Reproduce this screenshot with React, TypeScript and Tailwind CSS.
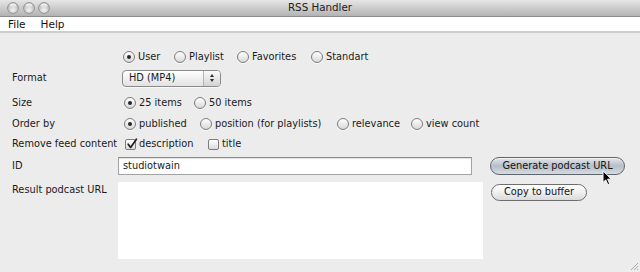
import React from 'react';

const Radio = ({ checked }: { checked?: boolean }) => (
  <span className="relative flex h-[12px] w-[12px] shrink-0 items-center justify-center rounded-full border border-[#7d7d7d] bg-linear-to-b from-white to-[#d9d9d9] shadow-[0_1px_0_rgba(255,255,255,0.8)]">
    {checked && <span className="h-[4px] w-[4px] rounded-full bg-[#262626]" />}
  </span>
);

const Check = ({ checked }: { checked?: boolean }) => (
  <span className="relative flex h-[11px] w-[11px] shrink-0 items-center justify-center rounded-[2px] border border-[#7d7d7d] bg-linear-to-b from-white to-[#dcdcdc]">
    {checked && (
      <svg viewBox="0 0 12 12" className="absolute -top-[2px] left-[0px] h-[12px] w-[12px]">
        <path d="M2.2 6.2 L4.6 9.4 L10.4 1.2" fill="none" stroke="#1f1f1f" strokeWidth="1.7" strokeLinecap="round" strokeLinejoin="round" />
      </svg>
    )}
  </span>
);

const Option = ({ label, checked, w, box }: { label: string; checked?: boolean; w: string; box?: boolean }) => (
  <div className={`flex items-center gap-[3px] ${w}`}>
    {box ? <Check checked={checked} /> : <Radio checked={checked} />}
    <span>{label}</span>
  </div>
);

const Light = () => (
  <svg viewBox="0 0 12 12" className="h-[12px] w-[12px]">
    <defs>
      <radialGradient id="lg" cx="50%" cy="70%" r="60%">
        <stop offset="0%" stopColor="#f4f4f4" />
        <stop offset="100%" stopColor="#b9b9b9" />
      </radialGradient>
      <linearGradient id="hl" x1="0" y1="0" x2="0" y2="1">
        <stop offset="0%" stopColor="#ffffff" stopOpacity="0.95" />
        <stop offset="100%" stopColor="#ffffff" stopOpacity="0.1" />
      </linearGradient>
    </defs>
    <circle cx="6" cy="6" r="5.4" fill="url(#lg)" stroke="#8d8d8d" strokeWidth="0.9" />
    <ellipse cx="6" cy="3.6" rx="3.4" ry="2" fill="url(#hl)" />
  </svg>
);

export default function App() {
  return (
    <div className="flex h-[272px] w-[640px] flex-col overflow-hidden bg-[#ececec] font-['DejaVu_Sans',sans-serif] text-[9.8px] text-[#1a1a1a]">
      {/* title bar */}
      <div className="relative flex h-[17px] items-center border-b border-[#8c8c8c] bg-linear-to-b from-[#e6e6e6] to-[#b3b3b3] px-[7px]">
        <div className="flex gap-[3.5px]">
          <Light />
          <Light />
          <Light />
        </div>
        <div className="absolute inset-0 flex items-center justify-center text-[10.3px] text-[#222]">RSS Handler</div>
      </div>

      {/* menu bar */}
      <div className="flex h-[16px] items-center gap-[15px] border-b-2 border-[#cdcdcd] bg-white px-[8px] pt-[1px] text-[10.5px] text-[#111]">
        <span>File</span>
        <span>Help</span>
      </div>

      <div className="relative flex flex-1 flex-col pl-[12px] pt-[14px]">
        <div className="flex h-[20px] items-center pl-[111px]">
          <Option label="User" checked w="w-[51px]" />
          <Option label="Playlist" w="w-[63px]" />
          <Option label="Favorites" w="w-[74px]" />
          <Option label="Standart" w="w-[80px]" />
        </div>

        <div className="mt-[1px] flex h-[20px] items-center">
          <span className="w-[110px]">Format</span>
          <div className="flex h-[17px] w-[99px] items-center overflow-hidden rounded-[4px] border border-[#8a8a8a] bg-linear-to-b from-white to-[#e2e2e2] shadow-[0_1px_0_rgba(255,255,255,0.7)]">
            <span className="flex-1 pl-[6px]">HD (MP4)</span>
            <div className="flex h-full w-[17px] flex-col items-center justify-center gap-[2px] border-l border-[#b5b5b5] bg-linear-to-b from-[#fafafa] to-[#d4d4d4]">
              <span className="h-0 w-0 border-x-[2.5px] border-b-[3px] border-x-transparent border-b-[#2b2b2b]" />
              <span className="h-0 w-0 border-x-[2.5px] border-t-[3px] border-x-transparent border-t-[#2b2b2b]" />
            </div>
          </div>
        </div>

        <div className="mt-[5px] flex h-[20px] items-center">
          <span className="w-[112px]">Size</span>
          <Option label="25 items" checked w="w-[70px]" />
          <Option label="50 items" w="w-[80px]" />
        </div>

        <div className="mt-[1px] flex h-[20px] items-center">
          <span className="w-[112px]">Order by</span>
          <Option label="published" checked w="w-[76px]" />
          <Option label="position (for playlists)" w="w-[137px]" />
          <Option label="relevance" w="w-[74px]" />
          <Option label="view count" w="w-[80px]" />
        </div>

        <div className="flex h-[20px] items-center">
          <span className="w-[113px]">Remove feed content</span>
          <Option label="description" checked box w="w-[83px]" />
          <Option label="title" box w="w-[60px]" />
        </div>

        <div className="mt-[3px] flex h-[18px] items-center">
          <span className="w-[106px]">ID</span>
          <div className="flex h-[18px] w-[354px] items-center border border-[#a3a3a3] border-t-[#8a8a8a] bg-white pl-[4px] shadow-[inset_0_1px_1px_rgba(0,0,0,0.12)]">
            studiotwain
          </div>
          <button className="ml-[18px] flex h-[18px] w-[135px] items-center justify-center rounded-full border border-[#5e646c] bg-linear-to-b from-[#e3e7ec] via-[#b7bec7] to-[#d6dbe1] text-[#151515] shadow-[inset_0_1px_0_rgba(255,255,255,0.6)]">
            Generate podcast URL
          </button>
        </div>

        <div className="mt-[7px] flex items-start">
          <span className="w-[106px] pt-[1px]">Result podcast URL</span>
          <div className="h-[77px] w-[365px] bg-white" />
          <button className="ml-[8px] mt-[2px] flex h-[17px] w-[96px] items-center justify-center rounded-full border border-[#6e6e6e] bg-linear-to-b from-white via-[#efefef] to-[#dadada] text-[#151515]">
            Copy to buffer
          </button>
        </div>

        {/* mouse pointer */}
        <svg viewBox="0 0 12 18" className="absolute left-[602px] top-[137px] h-[16px] w-[11px]">
          <path d="M1 1 L1 14 L4 11 L6.4 16.4 L8.4 15.5 L6.1 10.3 L10.2 10.3 Z" fill="#000" stroke="#fff" strokeWidth="1" strokeLinejoin="round" />
        </svg>

        {/* resize grip */}
        <svg viewBox="0 0 10 10" className="absolute bottom-[1px] right-[1px] h-[10px] w-[10px]">
          <path d="M9 2 L2 9 M9 5 L5 9 M9 8 L8 9" stroke="#9a9a9a" strokeWidth="0.8" />
        </svg>
      </div>
    </div>
  );
}
